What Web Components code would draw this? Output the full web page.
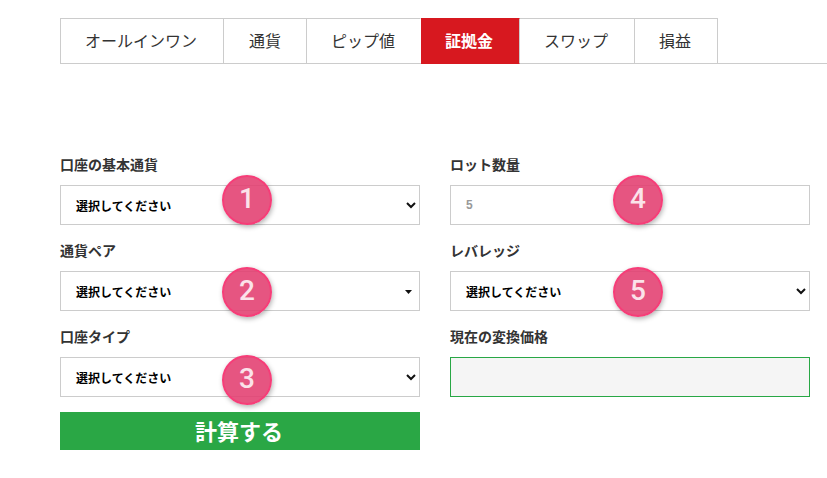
<!DOCTYPE html>
<html lang="ja">
<head>
<meta charset="utf-8">
<title>証拠金</title>
<style>
	html, body {
		margin: 0;
		background: #fff;
		font-family: "Liberation Sans", "Noto Sans CJK JP", sans-serif;
	}
</style>
</head>
<body>
<calc-page>
	<calc-tabs>
		<calc-tab>オールインワン</calc-tab>
		<calc-tab style="padding-left: 25px; padding-right: 25px">通貨</calc-tab>
		<calc-tab style="width: 114px; padding-left: 0; padding-right: 1px; border-right-color: transparent">ピップ値</calc-tab>
		<calc-tab active>証拠金</calc-tab>
		<calc-tab>スワップ</calc-tab>
		<calc-tab>損益</calc-tab>
	</calc-tabs>
	<calc-form>
		<calc-field slot="left" label="口座の基本通貨" badge="1" badge-top="-10"><calc-select></calc-select></calc-field>
		<calc-field slot="left" label="通貨ペア" badge="2" badge-top="-4"><calc-select small-arrow></calc-select></calc-field>
		<calc-field slot="left" label="口座タイプ" badge="3" badge-top="-2"><calc-select></calc-select></calc-field>
		<calc-button slot="left">計算する</calc-button>
		<calc-field slot="right" label="ロット数量" badge="4" badge-top="-10" badge-left="163"><calc-box>5</calc-box></calc-field>
		<calc-field slot="right" label="レバレッジ" badge="5" badge-top="-4" badge-left="163"><calc-select></calc-select></calc-field>
		<calc-field slot="right" label="現在の変換価格"><calc-box readonly></calc-box></calc-field>
	</calc-form>
</calc-page>
<script>
	/* ページ全体 */
	class CalcPage extends HTMLElement {
		constructor() {
			super();
			this.attachShadow({mode: 'open'}).innerHTML = `
				<style>
					:host {
						display: block;
						width: 827px;
						height: 478px;
						padding-top: 18px;
						box-sizing: border-box;
						overflow: hidden;
					}
				</style>
				<slot></slot>
			`;
		}
	}

	/* タブ列 */
	class CalcTabs extends HTMLElement {
		constructor() {
			super();
			this.attachShadow({mode: 'open'}).innerHTML = `
				<style>
					:host {
						display: flex;
						height: 46px;
						box-sizing: border-box;
						margin-left: 60px;
						border-bottom: 1px solid #ccc;
					}
				</style>
				<slot></slot>
			`;
		}
	}

	class CalcTab extends HTMLElement {
		constructor() {
			super();
			this.attachShadow({mode: 'open'}).innerHTML = `
				<style>
					:host {
						display: flex;
						align-items: center;
						justify-content: center;
						box-sizing: border-box;
						height: 46px;
						padding: 0 26px 3px 24px;
						border: 1px solid #ccc;
						border-left-width: 0;
						color: #333;
						font-size: 16px;
						white-space: nowrap;
					}
					:host(:first-child) {
						border-left-width: 1px;
					}
					:host([active]) {
						background: #d7181f;
						border-top-color: #d7181f;
						border-bottom-color: #d7181f;
						color: #fff;
						font-weight: bold;
					}
				</style>
				<slot></slot>
			`;
		}
	}

	/* 2カラムのフォーム */
	class CalcForm extends HTMLElement {
		constructor() {
			super();
			this.attachShadow({mode: 'open'}).innerHTML = `
				<style>
					:host {
						display: grid;
						grid-template-columns: 360px 360px;
						column-gap: 30px;
						padding: 90px 0 0 60px;
					}
					.col {
						display: flex;
						flex-direction: column;
						gap: 15px;
					}
				</style>
				<div class="col"><slot name="left"></slot></div>
				<div class="col"><slot name="right"></slot></div>
			`;
		}
	}

	class CalcField extends HTMLElement {
		constructor() {
			super();
			this.attachShadow({mode: 'open'}).innerHTML = `
				<style>
					:host {
						display: block;
						padding-top: 3px;
					}
					.label {
						height: 17px;
						margin-bottom: 11px;
						color: #333;
						font-size: 14px;
						font-weight: bold;
						line-height: 17px;
					}
					.control {
						position: relative;
					}
					.badge {
						position: absolute;
						display: flex;
						align-items: center;
						justify-content: center;
						width: 50px;
						height: 50px;
						padding-bottom: 4px;
						box-sizing: border-box;
						border: 2px solid #f63d78;
						border-radius: 50%;
						background: rgba(226, 62, 112, .88);
						box-shadow: 1px 2px 5px rgba(0, 0, 0, .3);
						color: #fbe3ea;
						font-family: Roboto, sans-serif;
						font-size: 28px;
						font-weight: 500;
					}
				</style>
				<div class="label"></div>
				<div class="control"><slot></slot></div>
			`;
			this.shadowRoot.querySelector('.label').textContent = this.getAttribute('label');

			const badge = this.getAttribute('badge');
			if (badge !== null) {
				const badgeElement = document.createElement('div');
				badgeElement.className = 'badge';
				badgeElement.textContent = badge;
				badgeElement.style.top = `${this.getAttribute('badge-top')}px`;
				badgeElement.style.left = `${this.getAttribute('badge-left') ?? 162}px`;
				this.shadowRoot.querySelector('.control').appendChild(badgeElement);
			}
		}
	}

	class CalcSelect extends HTMLElement {
		constructor() {
			super();
			const small = this.hasAttribute('small-arrow');
			this.attachShadow({mode: 'open'}).innerHTML = `
				<style>
					:host {
						display: flex;
						align-items: center;
						justify-content: space-between;
						box-sizing: border-box;
						height: 40px;
						padding: 0 3px 0 15px;
						border: 1px solid #ccc;
						background: #fff;
						color: #000;
						font-size: 12px;
						font-weight: bold;
					}
					svg {
						display: block;
					}
					.triangle {
						margin: 2px 4px 0 0;
					}
				</style>
				<span>選択してください</span>
				${small
					? '<svg class="triangle" width="7" height="4" viewBox="0 0 7 4"><path d="M0 0h7L3.5 4z" fill="#111"/></svg>'
					: '<svg width="10" height="10" viewBox="0 0 10 10"><path d="M1 3l4 4 4-4" fill="none" stroke="#111" stroke-width="2"/></svg>'}
			`;
		}
	}

	class CalcBox extends HTMLElement {
		constructor() {
			super();
			this.attachShadow({mode: 'open'}).innerHTML = `
				<style>
					:host {
						display: flex;
						align-items: center;
						box-sizing: border-box;
						height: 40px;
						padding: 0 15px;
						border: 1px solid #ccc;
						background: #fff;
						color: #999;
						font-size: 12px;
						font-weight: bold;
					}
					:host([readonly]) {
						border-color: #28a745;
						background: #f5f5f5;
					}
				</style>
				<slot></slot>
			`;
		}
	}

	class CalcButton extends HTMLElement {
		constructor() {
			super();
			this.attachShadow({mode: 'open'}).innerHTML = `
				<style>
					:host {
						display: flex;
						align-items: center;
						justify-content: center;
						box-sizing: border-box;
						height: 38px;
						padding: 0 2px 3px 0;
						background: #2aa745;
						color: #fff;
						font-size: 22px;
						font-weight: bold;
					}
				</style>
				<slot></slot>
			`;
		}
	}

	customElements.define('calc-page', CalcPage);
	customElements.define('calc-tabs', CalcTabs);
	customElements.define('calc-tab', CalcTab);
	customElements.define('calc-form', CalcForm);
	customElements.define('calc-field', CalcField);
	customElements.define('calc-select', CalcSelect);
	customElements.define('calc-box', CalcBox);
	customElements.define('calc-button', CalcButton);
</script>
</body>
</html>
